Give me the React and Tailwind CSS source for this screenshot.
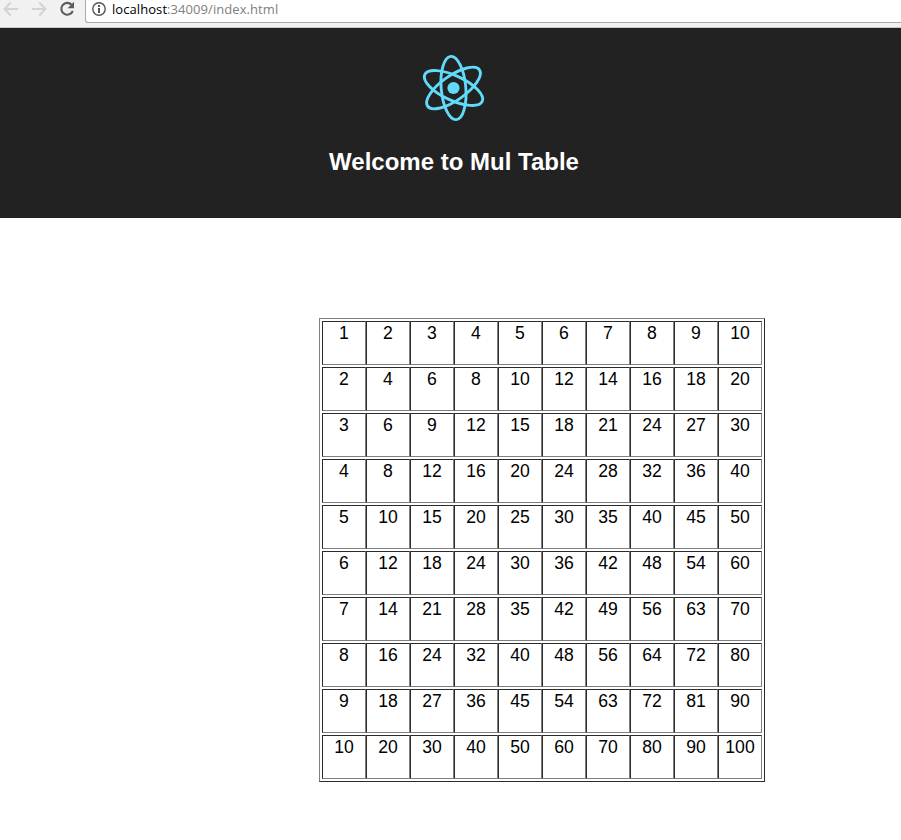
import React from 'react';

const numbers = Array.from({ length: 10 }, (_, i) => i + 1);

function BrowserBar() {
  return (
    <div className="flex h-7 items-start border-b border-[#c8c8c8] bg-[#f1f1f1]">
      <svg className="block h-[23px] w-[85px] shrink-0" viewBox="0 0 85 23" fill="none">
        <path d="M18 9H5M10.7 2.5L4.5 9l6.2 6.5" stroke="#d2d2d2" strokeWidth="1.9" />
        <path d="M32 9h13M39.3 2.5L45.5 9l-6.2 6.5" stroke="#d2d2d2" strokeWidth="1.9" />
        <path d="M71.6 4.8A5.9 5.9 0 1 0 72.8 10.8" stroke="#5a5c60" strokeWidth="2.1" />
        <path d="M74 1.8v6.4h-6.4z" fill="#5a5c60" />
      </svg>
      <div className="flex h-[23px] flex-1 rounded-bl-[3px] border-b border-l border-[#a9a9a9] bg-white pl-[6px]">
        <svg className="mt-[2px] block size-[14px] shrink-0" viewBox="0 0 14 14" fill="none">
          <circle cx="7" cy="7" r="6.2" stroke="#555" strokeWidth="1.4" />
          <path d="M6 3.1h2v1.8H6zM6 6h2v5H6z" fill="#555" />
        </svg>
        <div className="ml-[6px] font-['Open_Sans','Noto_Sans',sans-serif] text-[13px] leading-[18px] tracking-[0.07px] whitespace-nowrap text-[#808080]">
          <span className="text-black">localhost</span>:34009/index.html
        </div>
      </div>
    </div>
  );
}

function Logo() {
  return (
    <svg className="block h-20 w-20" viewBox="-39.5 -40 80 80" fill="none" stroke="#61dafb" strokeWidth="2.9">
      <circle r="6.1" fill="#61dafb" stroke="none" />
      <ellipse rx="31.7" ry="12.3" transform="rotate(85)" />
      <ellipse rx="31.7" ry="12.3" transform="rotate(25)" />
      <ellipse rx="31.7" ry="12.3" transform="rotate(-35)" />
    </svg>
  );
}

export default function App() {
  return (
    <div className="h-[840px] w-[901px] overflow-hidden bg-white font-['Liberation_Sans',Arial,sans-serif]">
      <BrowserBar />
      <header className="flex h-[190px] w-[907px] flex-col items-center bg-[#222] pt-5 text-white">
        <Logo />
        <h1 className="mt-5 pl-px text-2xl leading-7 font-bold whitespace-nowrap">Welcome to Mul Table</h1>
      </header>
      <main className="mt-[100px] ml-[319px] flex h-[464px] w-[446px] flex-col gap-[2px] border border-t-[#808080] border-r-[#2b2b2b] border-b-[#2b2b2b] border-l-[#808080] p-[2px]">
        {numbers.map((row) => (
          <div key={row} className="flex">
            {numbers.map((col) => (
              <div
                key={col}
                className="h-11 w-11 border border-t-[#2b2b2b] border-r-[#808080] border-b-[#808080] border-l-[#2b2b2b] pt-px text-center text-[17.6px] leading-5 text-black"
              >
                {row * col}
              </div>
            ))}
          </div>
        ))}
      </main>
    </div>
  );
}
